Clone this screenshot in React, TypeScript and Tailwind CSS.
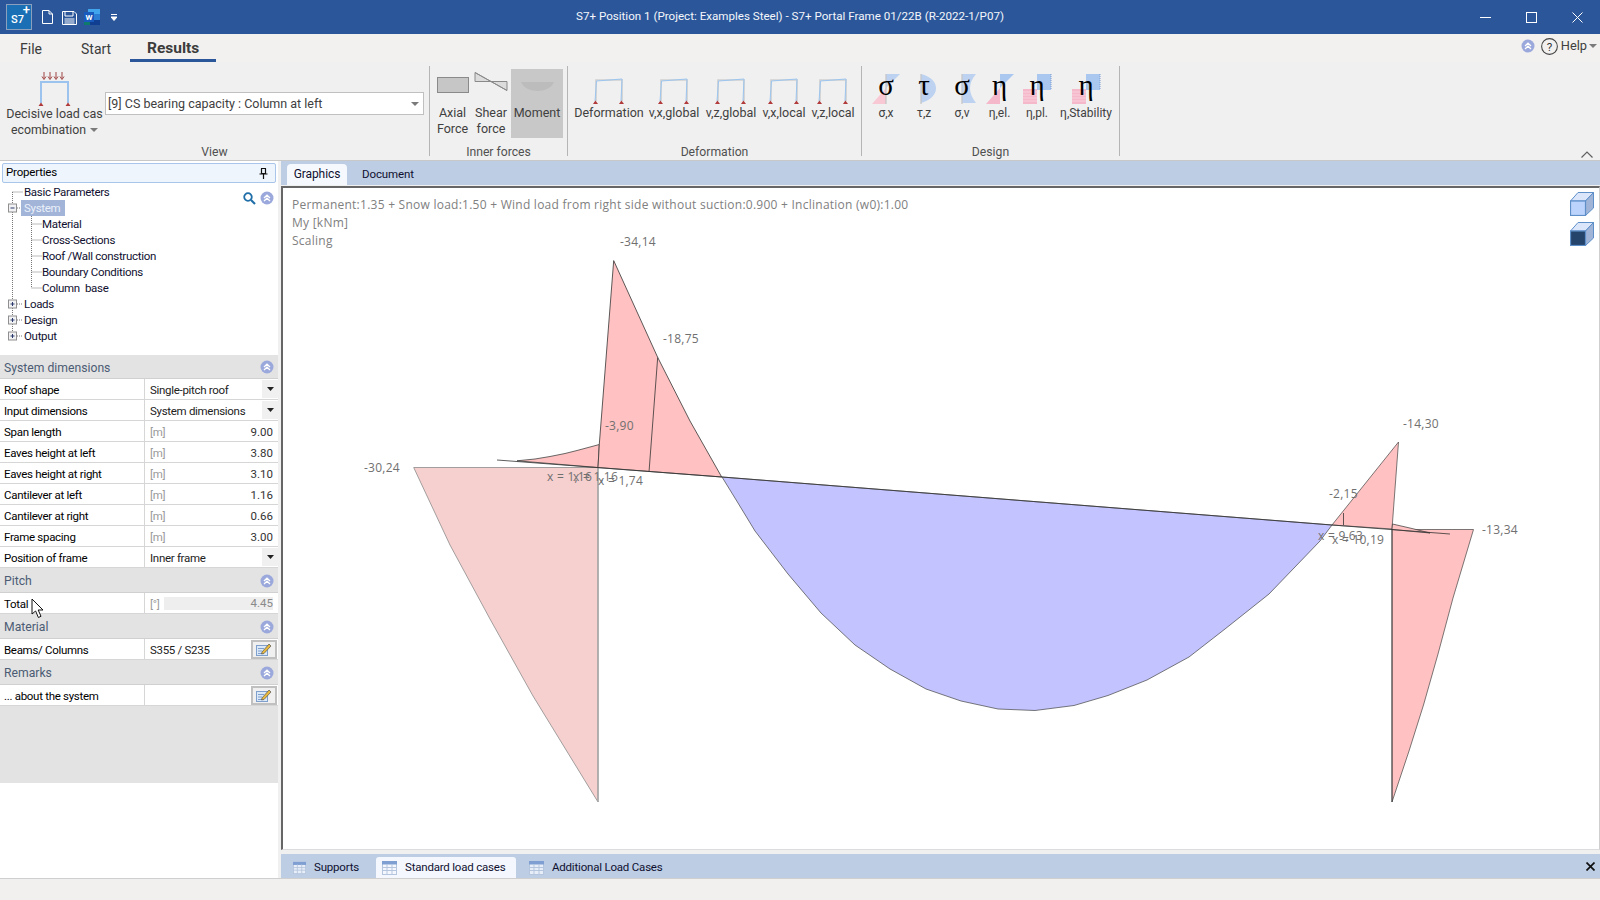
import React from "react";

function Chevs({ className = "" }: { className?: string }) {
  return (
    <svg width="14" height="14" viewBox="0 0 14 14" className={className}>
      <circle cx="7" cy="7" r="6.5" fill="#9ba8dc" />
      <path d="M4 7 L7 4.2 L10 7 M4 10 L7 7.2 L10 10" fill="none" stroke="#fff" strokeWidth="1.3" />
    </svg>
  );
}

function Caret() {
  return (
    <svg width="7" height="4" viewBox="0 0 7 4"><path d="M0 0h7L3.5 4z" fill="#222" /></svg>
  );
}

function GreyCaret() {
  return (
    <svg width="8" height="4" viewBox="0 0 8 4"><path d="M0 0h8L4 4z" fill="#7a7a7a" /></svg>
  );
}

function FrameIcon() {
  return (
    <svg width="32" height="27" viewBox="0 0 32 27">
      <path d="M3 24 V3 H29 V24" fill="none" stroke="#cfcfcf" strokeWidth="1.6" />
      <path d="M2 24 L3.5 4 L29 2 L28 24" fill="none" stroke="#9cc6f0" strokeWidth="1" />
      <path d="M0 27 L2.4 23.5 L5 27 Z M26 27 L28.4 23.5 L31 27 Z" fill="#b13a3a" />
    </svg>
  );
}

function LoadFrameIcon() {
  return (
    <svg width="34" height="34" viewBox="0 0 34 34">
      {[5, 11, 17, 23].map((x) => (
        <path key={x} d={`M${x + 1} 0 V6 M${x - 1} 4.5 L${x + 1} 7.5 L${x + 3} 4.5`} fill="none" stroke="#a04242" strokeWidth="1" />
      ))}
      <path d="M3 31 V10 H30 V31" fill="none" stroke="#9cc3ee" strokeWidth="2" />
      <path d="M0.5 34 L3 30.5 L5.5 34 Z M27.5 34 L30 30.5 L32.5 34 Z" fill="#b13a3a" />
    </svg>
  );
}

function DesignShape({ kind }: { kind: number }) {
  return (
    <svg width="30" height="31" viewBox="0 0 30 31" className="absolute left-0 top-0">
      {kind === 0 && (
        <>
          <path d="M15 1 H29 L15 15 Z" fill="#bcd2f0" />
          <path d="M15 15 V31 H1 Z" fill="#f8c8d4" />
          <path d="M15 1 V31" stroke="#c4c4c4" strokeWidth="1.2" />
        </>
      )}
      {kind === 1 && (
        <>
          <path d="M12 1 C32 6 32 24 12 30 Z" fill="#bcd2f0" />
          <path d="M12 1 V31" stroke="#c4c4c4" strokeWidth="1.2" />
        </>
      )}
      {kind === 2 && (
        <>
          <path d="M15 1 H29 C21 10 21 20 29 30 H15 Z" fill="#bcd2f0" />
          <path d="M15 1 V31" stroke="#c4c4c4" strokeWidth="1.2" />
        </>
      )}
      {kind === 3 && (
        <>
          <path d="M15 1 H29 L15 15 Z" fill="#a9c7ef" />
          <path d="M15 15 V31 H1 Z" fill="#f5b8cb" />
        </>
      )}
      {kind === 4 && (
        <>
          <rect x="15" y="1" width="14" height="16" fill="#a9c7ef" />
          <path d="M29 1 V17" stroke="#7a9ad0" strokeDasharray="1 1" />
          <rect x="1" y="16" width="14" height="15" fill="#f5b8cb" />
          <path d="M1 19 H15 M1 22 H15 M1 25 H15 M1 28 H15" stroke="#f8d0dc" />
        </>
      )}
    </svg>
  );
}

function DesignBtn({ label, glyph, kind, w }: { label: string; glyph: string; kind: number; w: string }) {
  return (
    <div className={`${w} flex flex-col items-center h-[69px] mt-[3px]`}>
      <div className="h-[36px] w-full flex items-start justify-center pt-[4px]">
        <div className="relative w-[30px] h-[31px]">
          <DesignShape kind={kind} />
          <span className="absolute inset-0 text-center font-['Liberation_Serif',serif] text-[29px] leading-[24px] text-black">{glyph}</span>
        </div>
      </div>
      <span className="leading-[16px] whitespace-nowrap text-[12px] text-[#404040]">{label}</span>
    </div>
  );
}

function DefBtn({ label, w }: { label: string; w: string }) {
  return (
    <div className={`${w} flex flex-col items-center h-[69px] mt-[3px]`}>
      <div className="h-[36px] flex items-end pb-[1px]"><FrameIcon /></div>
      <span className="leading-[16px] whitespace-nowrap text-[12.5px] text-[#404040]">{label}</span>
    </div>
  );
}

function ForceBtn({ l1, l2, w, active, children }: { l1: string; l2?: string; w: string; active?: boolean; children: React.ReactNode }) {
  return (
    <div className={`${w} flex flex-col items-center h-[69px] mt-[3px] ${active ? "bg-[#c8c8c8]" : ""}`}>
      <div className="h-[36px] flex items-start justify-center pt-[4px]">{children}</div>
      <span className="leading-[16px] text-[12.5px] text-[#404040] text-center whitespace-nowrap">{l1}</span>
      {l2 && <span className="leading-[16px] text-[12.5px] text-[#404040] text-center whitespace-nowrap">{l2}</span>}
    </div>
  );
}

function Group({ w, label, children, border = true }: { w: string; label: string; children: React.ReactNode; border?: boolean }) {
  return (
    <div className={`${w} h-[90px] flex flex-col ${border ? "border-r border-[#b5b5b5]" : ""}`}>
      <div className="h-[80px] flex shrink-0">{children}</div>
      <div className="h-[10px] leading-[12px] text-center text-[12.2px] text-[#505050]">{label}</div>
    </div>
  );
}

function Ribbon() {
  return (
    <div className="h-[98px] pt-[4px] bg-[#f0f0f0] flex text-[12.5px] shrink-0">
      <Group w="w-[430px]" label="View">
        <div className="w-[105px] h-[72px] mt-[3px] pl-[4px] flex flex-col items-center">
          <div className="h-[37px] pt-[3px]"><LoadFrameIcon /></div>
          <span className="leading-[16px] whitespace-nowrap text-[#404040] text-[12.5px]">Decisive load cas</span>
          <span className="leading-[16px] whitespace-nowrap text-[#404040] text-[12.3px] flex items-center gap-[4px]">ecombination <GreyCaret /></span>
        </div>
        <div className="w-[319px] h-[23px] mt-[26px] bg-white border border-[#c0c0c0] flex items-center justify-between pl-[2px] pr-[4px] text-[12.5px] text-[#404040]">
          <span className="mt-[1px]">[9] CS bearing capacity : Column at left</span>
          <GreyCaret />
        </div>
      </Group>
      <Group w="w-[138px]" label="Inner forces">
        <div className="w-[4px]" />
        <ForceBtn l1="Axial" l2="Force" w="w-[37px]">
          <svg width="32" height="16" viewBox="0 0 32 16" className="mt-[4px]"><rect x="0.5" y="0.5" width="31" height="15" fill="#c6c6c6" stroke="#8a8a8a" /></svg>
        </ForceBtn>
        <ForceBtn l1="Shear" l2="force" w="w-[40px]">
          <svg width="34" height="19" viewBox="0 0 34 19" className="-mt-[1px]">
            <path d="M1 0.5 V9.5 L17 9.5 Z" fill="#dcdcdc" stroke="#8a8a8a" />
            <path d="M17 9.5 L33 18.5 V9.5 Z" fill="#dcdcdc" stroke="#8a8a8a" />
            <path d="M1 0.5 L33 18.5" stroke="#8a8a8a" fill="none" />
          </svg>
        </ForceBtn>
        <ForceBtn l1="Moment" w="w-[52px]" active>
          <svg width="33" height="9" viewBox="0 0 33 9" className="mt-[9px]"><path d="M0 0 H33 C28 12 5 12 0 0 Z" fill="#bcbcbc" /></svg>
        </ForceBtn>
      </Group>
      <Group w="w-[294px]" label="Deformation">
        <div className="w-[5px]" />
        <DefBtn label="Deformation" w="w-[72px]" />
        <DefBtn label="v,x,global" w="w-[58px]" />
        <DefBtn label="v,z,global" w="w-[56px]" />
        <DefBtn label="v,x,local" w="w-[50px]" />
        <DefBtn label="v,z,local" w="w-[48px]" />
      </Group>
      <Group w="w-[258px]" label="Design">
        <div className="w-[5px]" />
        <DesignBtn label="σ,x" glyph="σ" kind={0} w="w-[38px]" />
        <DesignBtn label="τ,z" glyph="τ" kind={1} w="w-[38px]" />
        <DesignBtn label="σ,v" glyph="σ" kind={2} w="w-[38px]" />
        <DesignBtn label="η,el." glyph="η" kind={3} w="w-[37px]" />
        <DesignBtn label="η,pl." glyph="η" kind={4} w="w-[38px]" />
        <DesignBtn label="η,Stability" glyph="η" kind={4} w="w-[60px]" />
      </Group>
      <div className="flex-1 flex justify-end items-end pb-[2px] pr-[7px]">
        <svg width="12" height="7" viewBox="0 0 12 7"><path d="M0.5 6.5 L6 1 L11.5 6.5" fill="none" stroke="#606060" strokeWidth="1.2" /></svg>
      </div>
    </div>
  );
}

function TitleBar() {
  return (
    <div className="h-[34px] bg-[#2b579a] flex items-center text-white shrink-0">
      <div className="w-[130px] flex items-center">
        <div className="ml-[6px] w-[26px] h-[26px] bg-[#1a6fb5] border border-[#8aa0bc] relative flex items-center justify-center text-[11px] font-medium leading-none">
          <span className="mt-[4px] mr-[3px]">S7</span>
          <span className="absolute right-[1px] -top-[2px] text-[13px] leading-[13px]">+</span>
        </div>
        <svg width="11" height="14" viewBox="0 0 11 14" className="ml-[10px]"><path d="M0.5 0.5 H7 L10.5 4 V13.5 H0.5 Z" fill="none" stroke="#fff" /><path d="M7 0.5 V4 H10.5" fill="none" stroke="#fff" /></svg>
        <svg width="15" height="15" viewBox="0 0 15 15" className="ml-[9px]"><path d="M0.5 1.5 H12 L14.5 4 V14.5 H0.5 Z" fill="none" stroke="#fff" /><path d="M3 1.5 H11 V6 H3 Z M2.5 9 H12.5 M2.5 11 H12.5 M2.5 13 H12.5" fill="none" stroke="#fff" /></svg>
        <svg width="16" height="16" viewBox="0 0 16 16" className="ml-[7px]">
          <rect x="4" y="0" width="12" height="5" fill="#41a5ee" />
          <rect x="4" y="5" width="12" height="6" fill="#2b7cd3" />
          <rect x="4" y="11" width="12" height="5" fill="#103f91" />
          <rect x="0" y="12" width="6" height="4" fill="#0f7a6c" />
          <rect x="0" y="3" width="10" height="10" fill="#185abd" />
          <text x="5" y="11" textAnchor="middle" fontSize="8" fontWeight="700" fill="#fff" fontFamily="Roboto, sans-serif">W</text>
        </svg>
        <svg width="6" height="7" viewBox="0 0 6 7" className="ml-[11px]"><path d="M0 0.5 H6 M0 3 H6 L3 6.5 Z" stroke="#fff" strokeWidth="1" fill="#fff" /></svg>
      </div>
      <div className="w-[1320px] text-center text-[11.6px] text-[#f4f6fa]">S7+ Position 1 (Project: Examples Steel) - S7+ Portal Frame 01/22B (R-2022-1/P07)</div>
      <div className="w-[150px] pl-[12px] flex">
        <div className="w-[46px] flex justify-center"><svg width="11" height="11" viewBox="0 0 11 11"><path d="M0 5.5 H11" stroke="#fff" /></svg></div>
        <div className="w-[46px] flex justify-center"><svg width="11" height="11" viewBox="0 0 11 11"><rect x="0.5" y="0.5" width="10" height="10" fill="none" stroke="#fff" /></svg></div>
        <div className="w-[46px] flex justify-center"><svg width="11" height="11" viewBox="0 0 11 11"><path d="M0.5 0.5 L10.5 10.5 M10.5 0.5 L0.5 10.5" stroke="#fff" /></svg></div>
      </div>
    </div>
  );
}

function MenuRow() {
  return (
    <div className="h-[28px] bg-[#f2f1f0] flex items-start text-[14px] text-[#3c3c3c] shrink-0">
      <span className="ml-[20px] leading-[30px]">File</span>
      <span className="ml-[39px] leading-[30px]">Start</span>
      <span className="ml-[19px] w-[86px] h-[28px] leading-[28px] text-center font-bold text-[15.5px] border-b-[3px] border-[#2b579a]">Results</span>
      <div className="ml-auto flex items-center h-[22px] mt-[1px] text-[12.8px] text-[#404040]">
        <Chevs />
        <svg width="17" height="17" viewBox="0 0 16 16" className="ml-[6px]">
          <circle cx="8" cy="8" r="7.4" fill="none" stroke="#444" strokeWidth="1" />
          <text x="8" y="12" textAnchor="middle" fontSize="11" fill="#333" fontFamily="Roboto, sans-serif">?</text>
        </svg>
        <span className="ml-[3px]">Help</span>
        <span className="ml-[2px] mr-[3px]"><GreyCaret /></span>
      </div>
    </div>
  );
}

function TreeLines({ kind, last }: { kind: "root" | "leaf" | "open" | "plus" | "child"; last?: boolean }) {
  const w = kind === "child" ? 42 : 24;
  return (
    <svg width={w} height="16" viewBox={`0 0 ${w} 16`} className="shrink-0">
      <g stroke="#777" strokeDasharray="1 1" fill="none">
        {kind === "root" && <path d="M12.5 8 V16 M12.5 8 H23" />}
        {kind === "child" && <path d={`M12.5 0 V16 M31.5 0 V${last ? 8 : 16} M31.5 8 H42`} />}
        {(kind === "open" || kind === "plus") && <path d={`M12.5 0 V${last ? 4 : 16} M17 8 H23`} />}
      </g>
      {(kind === "open" || kind === "plus") && (
        <>
          <rect x="8.5" y="4" width="8" height="8" fill="#f2f2f4" stroke="#8f8f8f" />
          <path d="M10.5 8 H14.5" stroke="#2a3a6a" />
          {kind === "plus" && <path d="M12.5 6 V10" stroke="#2a3a6a" />}
        </>
      )}
    </svg>
  );
}

function TreeRow({ children, kind, last, selected }: { children: React.ReactNode; kind: "root" | "leaf" | "open" | "plus" | "child"; last?: boolean; selected?: boolean }) {
  return (
    <div className="h-[16px] flex items-center text-[11.5px] tracking-[-0.3px] text-[#101030] whitespace-nowrap">
      <TreeLines kind={kind} last={last} />
      <span className={selected ? "bg-[#a2b5d9] text-[#eaf0fa] -ml-[3px] pl-[3px] pr-[5px] h-[16px] leading-[16px]" : "leading-[16px]"}>{children}</span>
    </div>
  );
}

function Header({ title, h }: { title: string; h: string }) {
  return (
    <div className={`${h} bg-[#e3e3e3] border-b border-[#d0d0d0] flex items-center justify-between pl-[4px] pr-[4px] text-[12.2px] text-[#4c5c74]`}>
      <span className="mt-[3px]">{title}</span>
      <Chevs className="mt-[1px]" />
    </div>
  );
}

function Row({ label, children }: { label: string; children: React.ReactNode }) {
  return (
    <div className="h-[21px] border-b border-[#d6d6d6] flex items-stretch text-[11.5px] tracking-[-0.3px]">
      <div className="w-[145px] pl-[4px] border-r border-[#d6d6d6] leading-[22px] text-black whitespace-nowrap">{label}</div>
      <div className="flex-1 flex items-center min-w-0 pt-[3px]">{children}</div>
    </div>
  );
}

function Drop({ value }: { value: string }) {
  return (
    <>
      <span className="pl-[5px] flex-1 text-[#222] whitespace-nowrap">{value}</span>
      <span className="w-[16px] h-[18px] -mt-[3px] bg-[#f0f0f0] flex items-center justify-center"><Caret /></span>
    </>
  );
}

function Num({ value }: { value: string }) {
  return (
    <>
      <span className="pl-[5px] text-[#9a9a9a]">[m]</span>
      <span className="ml-auto pr-[5px] text-[#333] tracking-normal">{value}</span>
    </>
  );
}

function EditBtn() {
  return (
    <span className="w-[26px] h-[19px] -mt-[3px] mr-[1px] ml-auto bg-[#f0f0f0] border-2 border-[#c0c0c0] flex items-center justify-center">
      <svg width="16" height="13" viewBox="0 0 16 13">
        <rect x="0.5" y="2.5" width="11" height="10" fill="#dbe8f8" stroke="#7fa0cc" />
        <path d="M2 5.5 H8 M2 8 H6 M2 10.5 H7" stroke="#7fa0cc" />
        <path d="M6 9 L13 1 L15 3 L8 10.5 L5.5 11 Z" fill="#e8b93c" stroke="#555" strokeWidth="0.7" />
      </svg>
    </span>
  );
}

function LeftPanel() {
  return (
    <div className="w-[278px] h-full bg-white flex flex-col shrink-0 relative">
      <div className="mt-[2px] mx-[2px] h-[20px] bg-[#eef5fd] border border-[#a9c5ea] rounded-[2px] flex items-center justify-between pl-[3px] pr-[7px] text-[11.5px] tracking-[-0.2px] text-black">
        <span>Properties</span>
        <svg width="9" height="11" viewBox="0 0 9 11"><path d="M2 0.5 H7 M2.5 0.5 V5.5 H6.5 V0.5 M0.5 6 H8.5 M4.5 6 V11" fill="none" stroke="#111" strokeWidth="1.2" /></svg>
      </div>
      <div className="h-[172px] pt-[1px] relative">
        <TreeRow kind="root">Basic Parameters</TreeRow>
        <TreeRow kind="open" selected>System</TreeRow>
        <TreeRow kind="child">Material</TreeRow>
        <TreeRow kind="child">Cross-Sections</TreeRow>
        <TreeRow kind="child">Roof /Wall construction</TreeRow>
        <TreeRow kind="child">Boundary Conditions</TreeRow>
        <TreeRow kind="child" last>Column &nbsp;base</TreeRow>
        <TreeRow kind="plus">Loads</TreeRow>
        <TreeRow kind="plus">Design</TreeRow>
        <TreeRow kind="plus" last>Output</TreeRow>
        <div className="absolute right-[4px] top-[8px] flex items-center gap-[4px]">
          <svg width="13" height="13" viewBox="0 0 13 13"><circle cx="5" cy="5" r="3.8" fill="none" stroke="#1f6ea8" strokeWidth="1.8" /><path d="M8 8 L12 12" stroke="#1f6ea8" strokeWidth="2.2" /></svg>
          <Chevs />
        </div>
      </div>
      <Header title="System dimensions" h="h-[24px]" />
      <Row label="Roof shape"><Drop value="Single-pitch roof" /></Row>
      <Row label="Input dimensions"><Drop value="System dimensions" /></Row>
      <Row label="Span length"><Num value="9.00" /></Row>
      <Row label="Eaves height at left"><Num value="3.80" /></Row>
      <Row label="Eaves height at right"><Num value="3.10" /></Row>
      <Row label="Cantilever at left"><Num value="1.16" /></Row>
      <Row label="Cantilever at right"><Num value="0.66" /></Row>
      <Row label="Frame spacing"><Num value="3.00" /></Row>
      <Row label="Position of frame"><Drop value="Inner frame" /></Row>
      <Header title="Pitch" h="h-[25px]" />
      <Row label="Total">
        <span className="pl-[5px] text-[#9a9a9a] w-[19px]">[°]</span>
        <span className="ml-auto w-[109px] mr-[5px] h-[13px] -mt-[2px] bg-[#eeeeee] text-right leading-[13px] text-[#8a8a8a] tracking-normal">4.45</span>
      </Row>
      <Header title="Material" h="h-[25px]" />
      <Row label="Beams/ Columns">
        <span className="pl-[5px] text-[#222]">S355 / S235</span>
        <EditBtn />
      </Row>
      <Header title="Remarks" h="h-[25px]" />
      <Row label="... about the system"><EditBtn /></Row>
      <div className="h-[77px] bg-[#e3e3e3]" />
      <svg width="14" height="21" viewBox="0 0 14 21" className="absolute left-[31px] top-[437px]">
        <path d="M1 1 V16 L4.6 13 L7.4 19.5 L10 18.3 L7.2 12 H12 Z" fill="#fff" stroke="#111" strokeWidth="1" />
      </svg>
    </div>
  );
}

const blue = "722,476 1332,524 1320,540 1269,593 1225,628 1189,656 1147,679 1108,694.5 1074,704.5 1035,709.5 998,708 961,700 926,688 890,668 855,644 821,612 788,573 755,530 738,502";
const pinkMain = "598,466.5 599.3,443.2 613.7,259.6 657.7,356.4 690,420 721.7,476";
const pinkCant = "517,459.8 535,458 550,455.5 565,452.5 577,449.5 599.3,443.5 598,466.5";
const leftCol = "413.7,466.5 598,466.5 598,801 533,695 490,618 450,544";
const rightTri = "1332,524 1398.5,441 1392,528";
const rightCol = "1392,528.5 1473.5,528.5 1453,597 1438,653 1423.5,704 1409,750 1392,801";
const rightCant = "1392.5,523 1412,527.5 1430,532 1392,528.5";

function Chart() {
  const labels: [string, number, number][] = [
    ["-34,14", 620, 245],
    ["-18,75", 663, 342],
    ["-3,90", 605, 429],
    ["-30,24", 364, 471],
    ["-14,30", 1403, 427],
    ["-2,15", 1329, 497],
    ["-13,34", 1482, 533],
    ["x = 1,16", 547, 480],
    ["x = 1,16", 573, 480],
    ["x = 1,74", 598, 484],
    ["x = 9,63", 1318, 539],
    ["x = 10,19", 1332, 543],
  ];
  return (
    <svg width="1316" height="664" viewBox="283 187 1316 664" className="absolute left-0 top-0">
      <polygon points={leftCol} fill="#f6cfcf" stroke="#8c8c8c" strokeWidth="0.8" />
      <path d="M598 467 V801" stroke="#aaa" strokeWidth="1.6" />
      <polygon points={pinkCant} fill="#ffc1c1" stroke="#444" strokeWidth="0.8" />
      <polygon points={pinkMain} fill="#ffc1c1" stroke="#333" strokeWidth="0.8" />
      <polygon points={blue} fill="#c3c3ff" stroke="#444" strokeWidth="0.7" />
      <polygon points={rightTri} fill="#ffc1c1" stroke="#444" strokeWidth="0.7" />
      <polygon points={rightCol} fill="#ffc1c1" stroke="#444" strokeWidth="0.7" />
      <polygon points={rightCant} fill="#ffc1c1" stroke="#333" strokeWidth="0.7" />
      <path d="M657.7 356.4 L649 471 M1343.5 512 V524 M1392 528 V801" stroke="#333" strokeWidth="0.8" fill="none" />
      <path d="M497 459 L722 476 L1332 524 L1450 533" stroke="#333" strokeWidth="0.8" fill="none" />
      {labels.map(([t, x, y], i) => (
        <text key={i} x={x} y={y} fontSize="12" fill="#707070" fontFamily="'Open Sans', sans-serif">{t}</text>
      ))}
    </svg>
  );
}

function Cube({ dark }: { dark?: boolean }) {
  return (
    <svg width="24" height="24" viewBox="0 0 24 24">
      <path d="M0.5 9 L8 0.5 H23.5 L15.5 9 Z" fill="#dbe6fb" stroke="#5e8fc9" />
      <path d="M15.5 9 L23.5 0.5 V16 L15.5 23.5 Z" fill="#9fb4d6" stroke="#5e8fc9" />
      <rect x="0.5" y="9" width="15" height="14.5" fill={dark ? "#25446b" : "#bcd3fb"} stroke="#5e8fc9" strokeWidth="1.2" />
    </svg>
  );
}

function GridIcon({ active }: { active?: boolean }) {
  return (
    <svg width="15" height="14" viewBox="0 0 15 14">
      <rect x="0.5" y="0.5" width="14" height="13" fill={active ? "#f4f8fe" : "#e8eef8"} stroke="#b5c5de" />
      <rect x="0" y="0" width="15" height="3.5" fill="#7f9fd2" />
      <path d="M0 6.5 H15 M0 9.5 H15 M5 3 V14 M10 3 V14" stroke="#b5c5de" />
    </svg>
  );
}

function RightArea() {
  return (
    <div className="flex-1 h-full flex flex-col min-w-0">
      <div className="h-[24px] ml-[3px] bg-[#bccde4] flex items-end text-[12px] tracking-[-0.1px] text-[#101030] shrink-0 pl-[6px]">
        <div className="w-[60px] h-[21px] bg-[#f5f9fe] rounded-t-[4px] text-center leading-[20px]">Graphics</div>
        <div className="ml-[15px] h-[21px] leading-[20px] text-[11.5px]">Document</div>
      </div>
      <div className="h-[1px] bg-[#f0f0f0] shrink-0" />
      <div className="flex-1 ml-[3px] mb-[4px] bg-white border-t-2 border-l-2 border-[#666] border-r border-r-[#cfcfcf] border-b border-b-[#dcdcdc] relative pl-[9px] pt-[8px] font-['Open_Sans',sans-serif] text-[12px] tracking-[0.25px] leading-[18px] text-[#808080] overflow-hidden">
        <div>Permanent:1.35 + Snow load:1.50 + Wind load from right side without suction:0.900 + Inclination (w0):1.00</div>
        <div>My [kNm]</div>
        <div>Scaling</div>
        <Chart />
        <div className="absolute right-[5px] top-[4px] flex flex-col gap-[6px]">
          <Cube />
          <Cube dark />
        </div>
      </div>
      <div className="h-[24px] ml-[3px] bg-[#bccde4] flex items-end text-[11.5px] tracking-[-0.2px] text-[#101030] shrink-0 pl-[12px]">
        <div className="flex items-center h-[21px] w-[66px]"><GridIcon /><span className="ml-[8px]">Supports</span></div>
        <div className="ml-[17px] w-[140px] pl-[6px] flex items-center h-[21px] bg-[#f4f8fe] rounded-t-[3px]"><GridIcon active /><span className="ml-[8px]">Standard load cases</span></div>
        <div className="ml-[13px] flex items-center h-[21px]"><GridIcon /><span className="ml-[8px]">Additional Load Cases</span></div>
        <div className="ml-auto mr-[5px] h-[24px] flex items-center">
          <svg width="9" height="9" viewBox="0 0 9 9"><path d="M0.5 0.5 L8.5 8.5 M8.5 0.5 L0.5 8.5" stroke="#111" strokeWidth="1.7" /></svg>
        </div>
      </div>
    </div>
  );
}

export default function App() {
  return (
    <div className="w-[1600px] h-[900px] overflow-hidden flex flex-col bg-[#f0f0f0] font-[Roboto,sans-serif]">
      <TitleBar />
      <MenuRow />
      <Ribbon />
      <div className="h-[1px] bg-[#c8c8c8] shrink-0" />
      <div className="h-[717px] flex shrink-0 bg-[#f0f0f0]">
        <LeftPanel />
        <RightArea />
      </div>
      <div className="flex-1 bg-[#f1f0ef] border-t border-[#cfcfcf]" />
    </div>
  );
}
